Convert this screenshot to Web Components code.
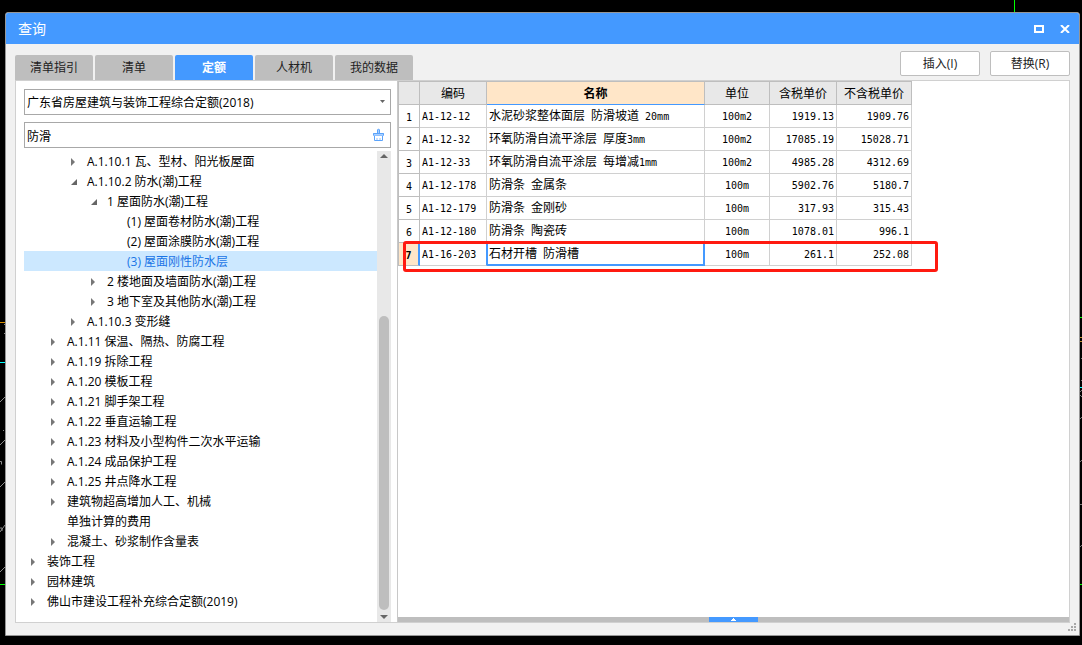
<!DOCTYPE html>
<html lang="zh-CN">
<head>
<meta charset="utf-8">
<title>查询</title>
<style>
  html, body { height: 100%; margin: 0; }
  body {
    background: #000;
    color: #000;
    font: 12px/20px "Open Sans", "Noto Sans CJK SC", sans-serif;
    overflow: hidden;
  }
</style>
</head>
<body>
<quota-desktop>
  <quota-window heading="查询">
    <quota-tabs slot="bar">
      <quota-tab>清单指引</quota-tab>
      <quota-tab>清单</quota-tab>
      <quota-tab selected>定额</quota-tab>
      <quota-tab>人材机</quota-tab>
      <quota-tab>我的数据</quota-tab>
    </quota-tabs>
    <quota-button slot="actions">插入(I)</quota-button>
    <quota-button slot="actions">替换(R)</quota-button>
    <quota-sidebar slot="side"></quota-sidebar>
    <quota-grid slot="main"></quota-grid>
  </quota-window>
</quota-desktop>

<script>
class Base extends HTMLElement {
  constructor() {
    super();
    this.attachShadow({ mode: 'open' });
  }
  connectedCallback() {
    const t = document.createElement('template');
    t.innerHTML = this.view();
    this.shadowRoot.replaceChildren(t.content.cloneNode(true));
  }
}

/* The CAD canvas that stays visible around the dialog */
class QuotaDesktop extends Base {
  view() {
    return `<style>
      :host { display: grid; box-sizing: border-box; height: 100vh; padding: 12px 2px 9px 5px; position: relative; background: #000; }
      svg { position: absolute; top: 0; height: 100%; }
      .l { left: 0; } .r { right: 0; }
      .axis { position: absolute; top: 0; right: 67px; width: 1px; height: 12px; background: #00ff00; }
      slot { display: contents; }
    </style>
    <svg class="l" width="5" height="645" viewBox="0 0 5 645" fill="none" stroke="#8c8c8c" aria-hidden="true">
      <path stroke="#d89000" d="M0 322.5H5"/><path stroke="#00ffff" d="M0 362.5H5"/><path stroke="#00ff00" d="M0 584.5H5"/>
      <path d="M0 402L5 397M0 445L5 440M0 487L5 482M0 532L5 525M0 572L5 567M0 461.500h1.500v3M0 528h2v3M3 430.500h1M4 324.500h1M4 333.500h1"/>
    </svg>
    <svg class="r" width="2" height="645" viewBox="0 0 2 645" fill="none" stroke="#777" aria-hidden="true">
      <path d="M1 358.500h1M1 380.500h1M0 391.500h1M1 390.500h1M0 395.500h1M1 396.500h1M0 418.500h1M1 417.500h1M0 461.500h1M1 460.500h1M0 504.500h2M0 546.500h1M1 545.500h1"/>
      <path stroke="#00ff00" d="M0 317.500H2M0 584.500H2"/><path stroke="#c09030" d="M0 337.500H2M0 341.500H2"/><path stroke="#00ffff" d="M0 387.500H2"/>
    </svg>
    <span class="axis"></span><slot></slot>`;
  }
}

class QuotaWindow extends Base {
  view() {
    return `<style>
      :host { display: flex; flex-direction: column; min-height: 0; box-sizing: border-box; border: 1px solid #969696; border-radius: 3px 3px 0 0; background: #f1f1f1; position: relative; overflow: hidden; }
      header { display: flex; align-items: center; box-sizing: border-box; height: 31px; padding: 1px 7px 0 12px; background: #4499ff; color: #fff; }
      h1 { flex: 1; margin: 0; font-size: 14px; line-height: 20px; font-weight: 400; }
      header button { width: 14px; height: 16px; margin-left: 12px; padding: 0; border: 0; background: none; display: grid; place-items: center; }
      header svg { display: block; }
      .bar { display: flex; align-items: flex-end; height: 36px; padding: 0 9px; }
      .bar slot[name=bar] { display: block; flex: 1; }
      .actions { display: flex; gap: 10px; padding-bottom: 4px; }
      .panels { flex: 1; min-height: 0; display: grid; grid-template-columns: 382px 1fr; margin: 0 9px 12px; border: 1px solid #d0d0d0; background: #fff; }
      .grip { position: absolute; right: 3px; bottom: 4px; }
    </style>
    <header><h1>${this.getAttribute('heading')}</h1>
      <button aria-label="最大化"><svg width="10" height="8"><rect x="1" y="1" width="8" height="6" fill="none" stroke="#fff" stroke-width="2"/></svg></button>
      <button aria-label="关闭"><svg width="10" height="8"><path d="M1 0L9 8M9 0L1 8" stroke="#fff" stroke-width="2"/></svg></button>
    </header>
    <div class="bar"><slot name="bar"></slot><div class="actions"><slot name="actions"></slot></div></div>
    <div class="panels"><slot name="side"></slot><slot name="main"></slot></div>
    <svg class="grip" width="8" height="8" fill="#a8a8a8" aria-hidden="true"><path d="M6 0h2v2h-2zM3 3h2v2h-2zM6 3h2v2h-2zM0 6h2v2h-2zM3 6h2v2h-2zM6 6h2v2h-2z"/></svg>`;
  }
}

class QuotaTabs extends Base {
  view() {
    return `<style>:host { display: block; } div { display: flex; gap: 2px; }</style>
      <div role="tablist"><slot></slot></div>`;
  }
}

class QuotaTab extends Base {
  view() {
    return `<style>
      :host { display: block; }
      button { display: block; width: 78px; height: 25px; padding: 0; border: 0; border-radius: 2px 2px 0 0; background: #bebebe; color: #222; font: inherit; line-height: 25px; }
      :host([selected]) button { background: #4499ff; color: #fff; font-weight: 700; }
    </style><button role="tab" aria-selected="${this.hasAttribute('selected')}"><slot></slot></button>`;
  }
}

class QuotaButton extends Base {
  view() {
    return `<style>
      :host { display: block; }
      button { display: block; width: 80px; height: 25px; padding: 0; border: 1px solid #bebebe; border-radius: 2px; background: #fff; color: #222; font: inherit; line-height: 23px; }
    </style><button><slot></slot></button>`;
  }
}

/* [level, state, label]; state: c = collapsed, o = open, - = leaf, s = selected leaf */
const TREE = [
  [2, 'c', 'A.1.10.1 瓦、型材、阳光板屋面'],
  [2, 'o', 'A.1.10.2 防水(潮)工程'],
  [3, 'o', '1 屋面防水(潮)工程'],
  [4, '-', '(1) 屋面卷材防水(潮)工程'],
  [4, '-', '(2) 屋面涂膜防水(潮)工程'],
  [4, 's', '(3) 屋面刚性防水层'],
  [3, 'c', '2 楼地面及墙面防水(潮)工程'],
  [3, 'c', '3 地下室及其他防水(潮)工程'],
  [2, 'c', 'A.1.10.3 变形缝'],
  [1, 'c', 'A.1.11 保温、隔热、防腐工程'],
  [1, 'c', 'A.1.19 拆除工程'],
  [1, 'c', 'A.1.20 模板工程'],
  [1, 'c', 'A.1.21 脚手架工程'],
  [1, 'c', 'A.1.22 垂直运输工程'],
  [1, 'c', 'A.1.23 材料及小型构件二次水平运输'],
  [1, 'c', 'A.1.24 成品保护工程'],
  [1, 'c', 'A.1.25 井点降水工程'],
  [1, 'c', '建筑物超高增加人工、机械'],
  [1, '-', '单独计算的费用'],
  [1, 'c', '混凝土、砂浆制作含量表'],
  [0, 'c', '装饰工程'],
  [0, 'c', '园林建筑'],
  [0, 'c', '佛山市建设工程补充综合定额(2019)']
];

class QuotaSidebar extends Base {
  view() {
    const arrow = {
      c: '<svg width="8" height="8" fill="#777"><path d="M2 0L6 4L2 8Z"/></svg>',
      o: '<svg width="8" height="8" fill="#666"><path d="M8 1V7H2Z"/></svg>'
    };
    const rows = TREE.map(([lv, st, text]) =>
      `<li role="treeitem" aria-level="${lv + 1}" class="${st === 's' ? 'on' : ''}" style="--lv:${lv}"><i>${arrow[st] || ''}</i><span>${text}</span></li>`).join('');
    return `<style>
      :host { display: flex; flex-direction: column; min-height: 0; padding: 8px 6px 0 8px; border-right: 1px solid #c8c8c8; }
      .field { position: relative; display: flex; height: 26px; margin-bottom: 7px; }
      .field.search { margin-bottom: 3px; }
      select, input { appearance: none; box-sizing: border-box; width: 100%; height: 26px; margin: 0; padding: 2px 24px 0 2px; border: 1px solid #a8a8a8; border-radius: 0; background: #fff; color: #000; font: inherit; outline: 0; }
      .field svg { position: absolute; pointer-events: none; }
      .caret { right: 5px; top: 11px; } .brush { right: 6px; top: 6px; }
      .scroll { flex: 1; min-height: 0; display: flex; }
      ul { flex: 1; margin: 0; padding: 0; list-style: none; overflow: hidden; }
      li { display: flex; align-items: center; box-sizing: border-box; height: 20px; padding: 2px 0 0 calc(5px + var(--lv) * 20px); white-space: nowrap; }
      i { display: grid; width: 8px; margin-right: 10px; }
      .on { background: #cce8ff; color: #1a75e6; }
      .track { display: flex; flex-direction: column; align-items: center; box-sizing: border-box; width: 14px; padding: 3px 0; background: #e8e8e8; }
      .space { flex: 157; } .thumb { flex: 294; width: 10px; border-radius: 5px; background: #bebebe; }
      .down { margin-top: 5px; }
    </style>
    <div class="field"><select aria-label="定额库"><option>广东省房屋建筑与装饰工程综合定额(2018)</option></select>
      <svg class="caret" width="7" height="4" aria-hidden="true"><path d="M1 0H6L3.5 3Z" fill="#666"/></svg></div>
    <div class="field search"><input aria-label="搜索" value="防滑">
      <svg class="brush" width="13" height="14" viewBox="0 0 13 14" aria-hidden="true"><path d="M5 1h3v4h4v3H1V5h4z" fill="#a8d0ff"/><path d="M5.500 5V2q1-1.500 2 0V5M1.500 7.500V5.500H11.500V7.500M2.500 8V12.500H10.500V8" fill="none" stroke="#5ba3fb"/><path d="M1 7.500H12" stroke="#8fc0ff"/><path d="M5 12V10M8 12V10" stroke="#8fc0ff"/></svg></div>
    <div class="scroll"><ul role="tree">${rows}</ul>
      <div class="track"><svg width="8" height="5" fill="#666"><path d="M4 0L8 4H0Z"/></svg><span class="space"></span><span class="thumb"></span><svg class="down" width="8" height="4" fill="#666"><path d="M0 0H8L4 4Z"/></svg></div></div>`;
  }
}

const ROWS = [
  ['A1-12-12', '水泥砂浆整体面层 防滑坡道 20mm', '100m2', '1919.13', '1909.76'],
  ['A1-12-32', '环氧防滑自流平涂层 厚度3mm', '100m2', '17085.19', '15028.71'],
  ['A1-12-33', '环氧防滑自流平涂层 每增减1mm', '100m2', '4985.28', '4312.69'],
  ['A1-12-178', '防滑条 金属条', '100m', '5902.76', '5180.7'],
  ['A1-12-179', '防滑条 金刚砂', '100m', '317.93', '315.43'],
  ['A1-12-180', '防滑条 陶瓷砖', '100m', '1078.01', '996.1'],
  ['A1-16-203', '石材开槽 防滑槽', '100m', '261.1', '252.08']
];

class QuotaGrid extends Base {
  view() {
    const mono = s => s.replace(/[ -~]+/g, '<span>$&</span>');
    const body = ROWS.map((r, n) => `<tr class="${n === 6 ? 'cur' : ''}"><th scope="row"><span>${n + 1}</span></th>` +
      r.map((c, k) => `<td class="c${k}">${mono(c)}</td>`).join('') + '</tr>').join('');
    return `<style>
      :host { display: flex; flex-direction: column; min-width: 0; min-height: 0; }
      .sheet { flex: 1; min-height: 0; position: relative; }
      table { table-layout: fixed; width: 514px; border-collapse: separate; border-spacing: 0; border: solid #bebebe; border-width: 1px 0 0 1px; font-family: "Noto Sans CJK SC", sans-serif; }
      th, td { box-sizing: border-box; height: 23px; padding: 0 2px; border: solid #d0d0d0; border-width: 0 1px 1px 0; line-height: 20px; font-weight: 400; white-space: nowrap; text-align: left; }
      thead th { background: #e8e8e8; border-color: #bebebe; text-align: center; }
      thead .name { background: #ffe6c8; border-bottom-color: #4499ff; font-weight: 700; }
      td { padding: 0 2px 2px; line-height: 18px; }
      tbody th { padding: 0; border-color: #bebebe; text-align: center; line-height: 18px; }
      td span, th span { font: 10px/12px "DejaVu Sans Mono", monospace; white-space: pre; }
      .c2 { text-align: center; } .c3, .c4 { text-align: right; }
      .cur th { background: #ffe6c8; border-right: 2px solid #4499ff; }
      .cur th span { font-weight: 700; }
      .cur .c1 { border-right: 2px solid #4499ff; border-bottom: 2px solid #4499ff; border-left: 1px solid #4499ff; padding: 0 1px 1px; }
      .cur .c0 { border-right-color: #4499ff; }
      .mark { position: absolute; left: 5px; top: 160px; box-sizing: border-box; width: 535px; height: 31px; border: 3px solid #ff1a10; border-radius: 3px; pointer-events: none; }
      .split { display: grid; place-items: center; height: 5px; background: #bebebe; }
      .split button { display: grid; place-items: center; width: 49px; height: 5px; padding: 0; border: 0; background: #4499ff; }
    </style>
    <div class="sheet"><table>
      <colgroup><col style="width:21px"><col style="width:67px"><col style="width:218px"><col style="width:65px"><col style="width:67px"><col style="width:75px"></colgroup>
      <thead><tr><th></th><th scope="col">编码</th><th scope="col" class="name">名称</th><th scope="col">单位</th><th scope="col">含税单价</th><th scope="col">不含税单价</th></tr></thead>
      <tbody>${body}</tbody></table><div class="mark"></div></div>
    <div class="split"><button aria-label="展开"><svg width="5" height="3" fill="#fff"><path d="M2 0h1v1h1v1h1v1H0V2h1V1h1z"/></svg></button></div>`;
  }
}

customElements.define('quota-desktop', QuotaDesktop);
customElements.define('quota-window', QuotaWindow);
customElements.define('quota-tabs', QuotaTabs);
customElements.define('quota-tab', QuotaTab);
customElements.define('quota-button', QuotaButton);
customElements.define('quota-sidebar', QuotaSidebar);
customElements.define('quota-grid', QuotaGrid);
</script>
</body>
</html>
